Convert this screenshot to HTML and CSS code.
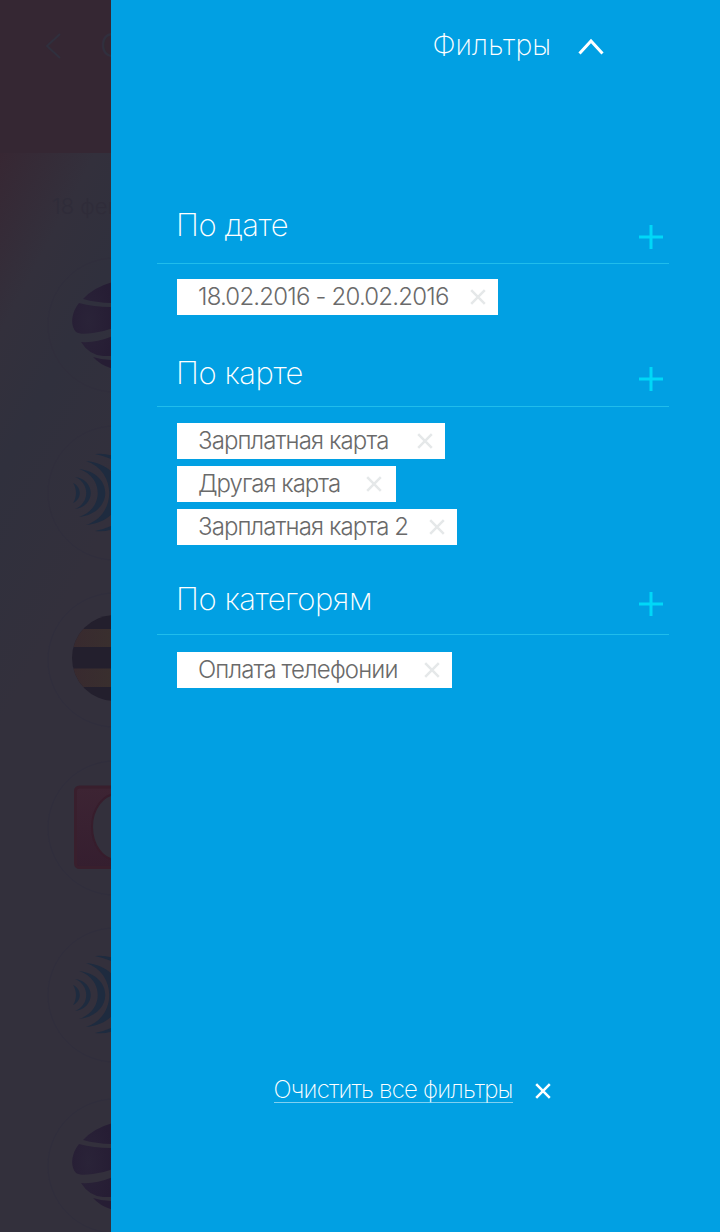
FILE: index.html
```html
<!DOCTYPE html>
<html lang="ru">
<head>
<meta charset="utf-8">
<title>Фильтры</title>
<link rel="stylesheet" href="styles.css">
</head>
<body>
<svg class="defs" width="0" height="0" aria-hidden="true">
  <defs>
    <radialGradient id="purple" cx="0.4" cy="0.45" r="0.6"><stop offset="0" stop-color="#2a2338"/><stop offset="1" stop-color="#261d34"/></radialGradient>
    <linearGradient id="red" x1="0" y1="0" x2="0" y2="1"><stop offset="0" stop-color="#3d2433"/><stop offset="1" stop-color="#351e2f"/></linearGradient>
    <linearGradient id="amber"><stop offset="0" stop-color="#38292f"/><stop offset="0.5" stop-color="#392f2e"/></linearGradient>
    <symbol id="ball" viewBox="0 0 136 136">
      <circle class="ring" cx="68" cy="68" r="67"/>
      <path fill="url(#purple)" d="M36 42Q47 30 66 25V46Q50 46 36 42ZM32 46Q48 50 66 50V71Q57 75 46 76Q33 78 29 75Q24 70 25.500 60Q27 52 32 46ZM34 85Q50 86 66 79V99H56Q42 98 34 85ZM46 100Q55 103 66 103V112Q53 108 46 100Z"/>
    </symbol>
    <symbol id="waves" viewBox="0 0 136 136">
      <circle class="ring" cx="68" cy="68" r="67"/>
      <path class="wave" d="M26 58C35 62 35 74 26 78C30 72 30 64 26 58ZM28 52C49 55 49 81 28 84C43 78 43 58 28 52ZM32 44C67 48 67 88 32 92C57 84 57 52 32 44ZM39 36C85 40 85 96 39 100C70 90 70 46 39 36ZM48 29Q58 28 66 31V35Q58 31 48 29ZM48 106Q58 104 66 100V104Q58 107 48 106Z"/>
    </symbol>
    <clipPath id="disc"><circle cx="68" cy="66" r="43"/></clipPath>
    <symbol id="stripes" viewBox="0 0 136 136">
      <circle class="ring" cx="68" cy="68" r="67"/>
      <g clip-path="url(#disc)">
        <path fill="#231f2d" d="M20 20H112V116H20Z"/>
        <path fill="url(#amber)" d="M20 37H112V55H20ZM20 76.500H112V95H20Z"/>
      </g>
    </symbol>
    <symbol id="box" viewBox="0 0 136 136">
      <circle class="ring" cx="68" cy="68" r="67"/>
      <rect x="28.500" y="27" width="82" height="80.500" rx="4" fill="url(#red)" stroke="#391f2d" stroke-width="3"/>
      <ellipse cx="70" cy="67" rx="25" ry="33" fill="#33303c" stroke="#371d2c" stroke-width="2"/>
    </symbol>
    <symbol id="cross" viewBox="0 0 16 16"><path d="M1.200 1.200L14.800 14.800M14.800 1.200L1.200 14.800"/></symbol>
    <symbol id="plus" viewBox="0 0 24 24"><path d="M12 0V24M0 12H24"/></symbol>
  </defs>
</svg>
<div class="screen">
  <div class="history">
    <div class="history-bar">
      <svg class="back" viewBox="0 0 16 26"><path d="M15 1L2 13L15 25"/></svg>
      <span class="history-title">О</span>
    </div>
    <div class="history-body">
      <div class="history-date">18 фев</div>
      <div class="operations">
        <svg class="operation"><use href="#ball"/></svg>
        <svg class="operation"><use href="#waves"/></svg>
        <svg class="operation"><use href="#stripes"/></svg>
        <svg class="operation"><use href="#box"/></svg>
        <svg class="operation"><use href="#waves"/></svg>
        <svg class="operation operation-last"><use href="#ball"/></svg>
      </div>
    </div>
  </div>
  <main class="panel">
    <header class="panel-head">
      <h1 class="panel-title">Фильтры</h1>
      <svg class="chevron" viewBox="0 0 26 18"><path d="M1.500 15.500L13 3L24.500 15.500"/></svg>
    </header>
    <section class="group group-date">
      <div class="group-head"><h2 class="group-title">По дате</h2><svg class="plus"><use href="#plus"/></svg></div>
      <div class="chips">
        <div class="chip"><span class="c-date">18.02.2016 - 20.02.2016</span><svg class="cross"><use href="#cross"/></svg></div>
      </div>
    </section>
    <section class="group group-card">
      <div class="group-head"><h2 class="group-title">По карте</h2><svg class="plus"><use href="#plus"/></svg></div>
      <div class="chips">
        <div class="chip"><span class="c-salary">Зарплатная карта</span><svg class="cross"><use href="#cross"/></svg></div>
        <div class="chip chip-other"><span class="c-other">Другая карта</span><svg class="cross"><use href="#cross"/></svg></div>
        <div class="chip"><span class="c-second">Зарплатная карта 2</span><svg class="cross"><use href="#cross"/></svg></div>
      </div>
    </section>
    <section class="group group-category">
      <div class="group-head"><h2 class="group-title">По категорям</h2><svg class="plus"><use href="#plus"/></svg></div>
      <div class="chips">
        <div class="chip"><span class="c-phone">Оплата телефонии</span><svg class="cross"><use href="#cross"/></svg></div>
      </div>
    </section>
    <footer class="clear"><span class="clear-text">Очистить все фильтры</span><svg class="cross clear-cross"><use href="#cross"/></svg></footer>
  </main>
</div>
</body>
</html>
```
FILE: styles.css
```css
* { box-sizing: border-box; }
body { margin: 0; font-family: Inter, "Open Sans", sans-serif; font-weight: 300; }
svg { display: block; flex: none; fill: none; }
.defs { position: absolute; }
h1, h2 { margin: 0; font-weight: 250; }
.screen { display: flex; width: 720px; height: 1232px; overflow: hidden; }

.history { width: 111px; flex: none; overflow: hidden; background: #33303c; }
.history-bar { display: flex; height: 153px; padding: 33px 0 0 45px; background: #352733; }
.back { width: 16px; height: 26px; stroke: #30303e; stroke-width: 2; }
.history-title { margin: -7px 0 0 39px; font-size: 33px; line-height: 38px; color: #30303e; }
.history-body { height: 1079px; padding-top: 39px; background: linear-gradient(118deg, #372733 0, #33303c 85px, #30303d 150px, #33303c 270px); }
.history-date { padding-left: 52px; font-size: 22px; line-height: 28px; color: #2f2c39; white-space: nowrap; }
.operations { display: flex; flex-direction: column; gap: 31.500px; padding: 37px 0 0 47px; }
.operation { width: 136px; height: 136px; }
.operation-last { margin-top: 3px; }
.ring { stroke: #302e3c; stroke-width: 1; }
.wave { fill: #1e2b3f; }

.panel { flex: 1; background: #01a0e3; padding-left: 46px; color: #fff; }
.panel-head { display: flex; height: 190px; padding: 27px 0 0 275.500px; }
.panel-title { width: 118.500px; font-size: 28.500px; line-height: 36px; letter-spacing: .1px; white-space: nowrap; }
.chevron { width: 26px; height: 18px; margin: 11px 0 0 27px; stroke: #fff; stroke-width: 3; }
.group { width: 512px; }
.group-date { height: 148px; }
.group-card { height: 226px; }
.group-head { display: flex; justify-content: space-between; height: 74px; padding: 15px 6px 0 19px; border-bottom: 1px solid #20bdec; }
.group-title { font-size: 31px; line-height: 40px; letter-spacing: -.45px; white-space: nowrap; }
.plus { width: 24px; height: 24px; margin-top: 20px; stroke: #00d8f8; stroke-width: 3; }
.group-card .group-head { height: 69px; }
.group-card .plus { margin-top: 14px; }
.group-category .group-head { height: 71px; }
.group-category .plus { margin-top: 13px; }
.chips { display: flex; flex-direction: column; align-items: flex-start; gap: 7px; padding: 15px 0 0 20px; }
.group-card .chips { padding-top: 16px; }
.group-category .chips { padding-top: 17px; }
.chip { display: flex; height: 36px; padding: 0 12px 0 21px; background: #fff; color: #6a6a6a; font-size: 24px; line-height: 35px; letter-spacing: -.9px; white-space: nowrap; }
.chip-other { padding-right: 14px; }
.cross { width: 16px; height: 16px; margin-top: 10px; stroke: #e5e8e9; stroke-width: 2.500; }
.c-date { width: 272px; letter-spacing: -.79px; }
.c-salary { width: 219px; }
.c-other { width: 168px; letter-spacing: -1px; }
.c-second { width: 231px; }
.c-phone { width: 226px; letter-spacing: -.86px; }
.clear { display: flex; margin-top: 386px; padding-left: 116.500px; font-size: 24px; font-weight: 250; letter-spacing: -.77px; }
.clear-text { width: 239px; height: 29px; line-height: 31px; border-bottom: 1px solid #80d0f1; white-space: nowrap; }
.clear-cross { margin: 9px 0 0 22px; stroke: #fff; }
```
